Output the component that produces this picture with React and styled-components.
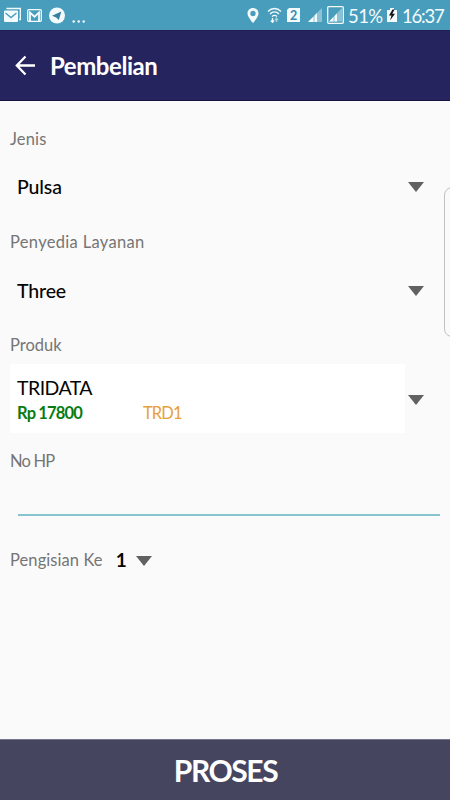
import React from "react";
import styled, { createGlobalStyle } from "styled-components";

const GlobalStyle = createGlobalStyle`
  * { box-sizing: border-box; }
  body { margin: 0; background: #fafafa; font-family: Lato, "Open Sans", sans-serif; }
`;

const Screen = styled.div`
  position: relative;
  width: 450px;
  height: 800px;
  display: flex;
  flex-direction: column;
  overflow: hidden;
  background: #fafafa;
`;

const StatusBar = styled.header`
  flex: 0 0 30px;
  display: flex;
  justify-content: space-between;
  background: #489dbc;
  color: #f4fbfd;
`;

const StatusIcons = styled.svg`
  display: block;
  height: 30px;
  width: ${(p) => p.$width}px;
`;

const StatusRight = styled.div`
  display: flex;
  align-items: center;
  width: 205px;
`;

const StatusValue = styled.div`
  flex: none;
  width: ${(p) => p.$width}px;
  padding-top: 2px;
`;

const Text = styled.span`
  display: block;
  white-space: pre;
  font-size: ${(p) => p.$size}px;
  line-height: ${(p) => p.$line || 24}px;
  font-weight: ${(p) => p.$weight || 400};
  letter-spacing: ${(p) => p.$track || 0}px;
  color: ${(p) => p.$color || "#050505"};
`;

const AppBar = styled.div`
  flex: 0 0 71px;
  display: flex;
  align-items: center;
  gap: 14px;
  padding: 1px 0 0 15px;
  background: #26245f;
  border-top: 1px solid #1f1f55;
  border-bottom: 1px solid #16143f;
`;

const BackArrow = styled.svg`
  display: block;
  width: 21px;
  height: 22px;
`;

const Form = styled.main`
  flex: 1;
  display: flex;
  flex-direction: column;
  padding: 26px 10px 0;
`;

const Field = styled.section`
  height: ${(p) => p.$height}px;
`;

const SelectRow = styled.div`
  display: flex;
  align-items: center;
  justify-content: space-between;
  height: ${(p) => p.$height}px;
  margin-top: ${(p) => p.$top || 0}px;
  padding: 0 16px 0 ${(p) => p.$left ?? 7}px;
`;

const Caret = styled.svg`
  display: block;
  width: 16px;
  height: 10px;
  margin-top: ${(p) => p.$drop || 0}px;
  fill: #616161;
`;

const ProductCard = styled.div`
  width: 395px;
  height: 69px;
  padding: 12px 7px 0;
  background: #fff;
`;

const PriceRow = styled.div`
  display: grid;
  grid-template-columns: 126px 1fr;
  margin-top: 1px;
`;

const PhoneInput = styled.div`
  height: 43px;
  margin: 0 0 0 8px;
  border-bottom: 2px solid #86c4cf;
`;

const RepeatRow = styled.div`
  display: flex;
  align-items: center;
  height: 24px;
`;

const Count = styled.div`
  width: 33px;
  padding-left: 13px;
`;

const EdgePanel = styled.div`
  position: absolute;
  top: 187px;
  right: -12px;
  width: 18px;
  height: 150px;
  border: 1px solid #c1c1c1;
  border-radius: 8px;
`;

const SubmitButton = styled.button`
  flex: 0 0 61px;
  display: flex;
  align-items: center;
  justify-content: center;
  padding: 0 0 0 1px;
  border: 0;
  border-top: 1px solid #77768c;
  background: #46455f;
  font-family: inherit;
`;

const Arrow = ({ drop }) => (
  <Caret $drop={drop} viewBox="0 0 16 10"><path d="M0 0H16L8 10Z" /></Caret>
);

const Label = ({ children, track }) => (
  <Text $size={16.5} $track={track} $color="#757575">{children}</Text>
);

export default function App() {
  return (
    <>
      <GlobalStyle />
      <Screen>
        <StatusBar>
          <StatusIcons $width={90} viewBox="0 0 90 30">
            <path d="M7 9V8.500H20.300V19.500H19" fill="none" stroke="#f4fbfd" strokeWidth="1.300" />
            <rect x="4" y="10.500" width="14" height="11.500" rx="1" fill="#f4fbfd" />
            <path d="M5.500 13L11 17.500L16.500 13" fill="none" stroke="#489dbc" strokeWidth="1.400" />
            <rect x="27.700" y="9.700" width="13.600" height="11.600" rx="1" fill="none" stroke="#f4fbfd" strokeWidth="1.300" />
            <path d="M30 21V12.500L34.500 16.700L39 12.500V21" fill="none" stroke="#f4fbfd" strokeWidth="1.800" />
            <circle cx="57" cy="15.500" r="8" fill="#f4fbfd" />
            <path d="M52 15.800L61.300 11.500L58.800 20L56.200 17.600Z" fill="#35819f" />
            <g fill="#f4fbfd"><circle cx="73.700" cy="21.500" r="1.200" /><circle cx="78.700" cy="21.500" r="1.200" /><circle cx="83.700" cy="21.500" r="1.200" /></g>
          </StatusIcons>
          <StatusRight>
            <StatusIcons $width={103} viewBox="245 0 103 30">
              <path fill="#f4fbfd" fillRule="evenodd" d="M253 8C249.700 8 247.500 10.400 247.500 13.500C247.500 17 253 23 253 23S258.500 17 258.500 13.500C258.500 10.400 256.300 8 253 8ZM253 10.800A2.700 2.700 0 1 1 253 16.200A2.700 2.700 0 1 1 253 10.800Z" />
              <g fill="none" stroke="#f4fbfd" strokeWidth="1.300">
                <path d="M268 11.500C271.700 7.500 277.300 7.500 281 11.500M270 14C272.700 11.300 276.300 11.300 279 14M272 16.500C273.700 15 275.300 15 277 16.500" />
                <path d="M272.500 18V22M271 20.500L272.500 22.300L274 20.500" />
                <path d="M276.500 22V18.500M275 20L276.500 18.200L278 20" opacity=".55" />
              </g>
              <path d="M289 8H300V22H287V10Z" fill="#f4fbfd" />
              <text x="293.500" y="19.500" textAnchor="middle" fontFamily="Lato" fontWeight="700" fontSize="12.500" fill="#398baa">2</text>
              <path d="M322 8V22H308Z" fill="#f4fbfd" opacity=".4" />
              <path d="M313.500 16.500V22H308ZM314.500 15.500L317 13V22H314.500Z" fill="#f4fbfd" />
              <rect x="327.700" y="6.700" width="15.600" height="16.600" rx="1" fill="none" stroke="#f4fbfd" strokeWidth="1.300" />
              <path d="M342 8V21.500H329Z" fill="#f4fbfd" opacity=".4" />
              <path d="M333.500 17V21.500H329ZM334.500 16L337 13.500V21.500H334.500Z" fill="#f4fbfd" />
            </StatusIcons>
            <StatusValue $width={36}><Text $size={18.500} $track={-0.600} $color="#f4fbfd">51%</Text></StatusValue>
            <StatusIcons $width={18} viewBox="384 0 18 30">
              <path d="M387 10H390V8H394V10H397V22H387Z" fill="#f4fbfd" />
              <path d="M392.500 9.500L389 15.500H391.500L390 20.500L395 13.800H392.300L394.500 9.500Z" fill="#111" />
            </StatusIcons>
            <StatusValue $width={46}><Text $size={18.500} $track={-1.200} $color="#f4fbfd">16:37</Text></StatusValue>
          </StatusRight>
        </StatusBar>

        <AppBar>
          <BackArrow viewBox="0 0 21 22"><path d="M20 10.500H2M10.500 1.500L1.800 10.500L10.500 19.500" fill="none" stroke="#fff" strokeWidth="2.300" /></BackArrow>
          <Text $size={24} $line={30} $weight={700} $track={-0.450} $color="#fff">Pembelian</Text>
        </AppBar>

        <Form>
          <Field $height={103}>
            <Label track={0.150}>Jenis</Label>
            <SelectRow $height={44} $top={14}>
              <Text $size={19.500} $weight={500} $track={-0.150}>Pulsa</Text><Arrow />
            </SelectRow>
          </Field>
          <Field $height={103}>
            <Label track={0.320}>Penyedia Layanan</Label>
            <SelectRow $height={44} $top={15}>
              <Text $size={19.500} $weight={500} $track={-0.150}>Three</Text><Arrow />
            </SelectRow>
          </Field>
          <Field $height={116}>
            <Label>Produk</Label>
            <SelectRow $height={69} $top={7} $left={0}>
              <ProductCard>
                <Text $size={19.500} $track={-0.550}>TRIDATA</Text>
                <PriceRow>
                  <Text $size={16.500} $weight={700} $track={-0.850} $color="#087c12">Rp 17800</Text>
                  <Text $size={16.500} $track={-0.900} $color="#e9a03b">TRD1</Text>
                </PriceRow>
              </ProductCard>
              <Arrow drop={3} />
            </SelectRow>
          </Field>
          <Field $height={99}>
            <Label track={-0.800}>No HP</Label>
            <PhoneInput />
          </Field>
          <RepeatRow>
            <Label track={0.080}>Pengisian Ke</Label>
            <Count><Text $size={19} $weight={700}>1</Text></Count>
            <Arrow drop={1} />
          </RepeatRow>
        </Form>

        <SubmitButton><Text $size={30} $line={36} $weight={700} $track={-1.400} $color="#fff">PROSES</Text></SubmitButton>
        <EdgePanel />
      </Screen>
    </>
  );
}
